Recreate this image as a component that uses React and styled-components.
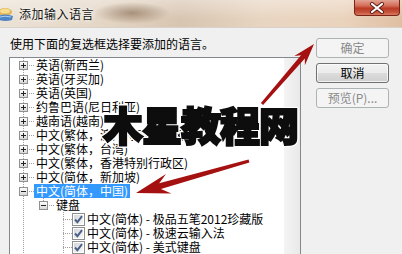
import React from 'react'
import styled, { createGlobalStyle } from 'styled-components'

const languages = [
    '英语(新西兰)',
    '英语(牙买加)',
    '英语(英国)',
    '约鲁巴语(尼日利亚)',
    '越南语(越南)',
    '中文(繁体，澳门特别行政区)',
    '中文(繁体，台湾)',
    '中文(繁体，香港特别行政区)',
    '中文(简体，新加坡)'
]

const rows = [
    ...languages.map((text) => ({ text, level: 0, exp: 'plus' })),
    { text: '中文(简体，中国)', level: 0, exp: 'minus', selected: true },
    { text: '键盘', level: 1, exp: 'minus', last: true },
    { text: '中文(简体) - 极品五笔2012珍藏版', level: 2, check: true },
    { text: '中文(简体) - 极速云输入法', level: 2, check: true },
    { text: '中文(简体) - 美式键盘', level: 2, check: true }
]

const GlobalStyle = createGlobalStyle`
    html, body { margin: 0; padding: 0; }
    body {
        width: 402px;
        height: 254px;
        overflow: hidden;
        background: #f0f0f0;
        font-family: "Noto Sans CJK SC", "DejaVu Sans", sans-serif;
    }
`

function TreeLines({ row, width }) {
    const c = 13 + 20 * row.level
    const dots = { stroke: '#a0a0a0', strokeDasharray: '1 1', shapeRendering: 'crispEdges' }
    return (
        <svg width={width} height="14" style={{ flex: 'none', display: 'block' }}>
            <defs>
                <linearGradient id="boxfill" x1="0" y1="0" x2="0" y2="1">
                    <stop offset="0" stopColor="#ffffff" />
                    <stop offset="1" stopColor="#d6d6d6" />
                </linearGradient>
            </defs>
            {row.level > 0 && <line x1="13.5" y1="0" x2="13.5" y2="14" {...dots} />}
            <line x1={c + 0.5} y1="0" x2={c + 0.5} y2={row.last ? 7 : 14} {...dots} />
            <line x1={c} y1="7.5" x2={width} y2="7.5" {...dots} />
            {row.exp && (
                <g shapeRendering="crispEdges">
                    <rect x={c - 3.5} y="3.5" width="8" height="8" fill="url(#boxfill)" stroke="#919191" />
                    <line x1={c - 2} y1="7.5" x2={c + 3} y2="7.5" stroke="#222" />
                    {row.exp === 'plus' && <line x1={c + 0.5} y1="5" x2={c + 0.5} y2="10" stroke="#222" />}
                </g>
            )}
        </svg>
    )
}

function CheckBox() {
    return (
        <svg width="13" height="13" style={{ flex: 'none', display: 'block' }}>
            <defs>
                <linearGradient id="chkfill" x1="0" y1="0" x2="1" y2="1">
                    <stop offset="0" stopColor="#d3d6db" />
                    <stop offset="1" stopColor="#f8f8f8" />
                </linearGradient>
            </defs>
            <rect x="0.5" y="0.5" width="12" height="12" fill="#fff" stroke="#8e8f8f" shapeRendering="crispEdges" />
            <rect x="2" y="2" width="9" height="9" fill="url(#chkfill)" />
            <path d="M3 6.5 L5.4 9.2 L10 3.2" fill="none" stroke="#4a5f85" strokeWidth="1.9" />
        </svg>
    )
}

function TreeRow({ row }) {
    const width = row.check ? 20 * row.level + 22 : 20 * row.level + 24
    return (
        <Row>
            <TreeLines row={row} width={width} />
            {row.check && <CheckBox />}
            <ItemLabel $selected={row.selected}>{row.text}</ItemLabel>
        </Row>
    )
}

function arrowPoints(tail, tip, headLen, headHalf, w0, w1, notch) {
    const dx = tip[0] - tail[0]
    const dy = tip[1] - tail[1]
    const len = Math.hypot(dx, dy)
    const u = [dx / len, dy / len]
    const v = [-u[1], u[0]]
    const at = (p, a, b) => [p[0] + u[0] * a + v[0] * b, p[1] + u[1] * a + v[1] * b]
    const pts = [
        at(tail, 0, w0 / 2),
        at(tip, -(headLen - notch), w1 / 2),
        at(tip, -headLen, headHalf),
        tip,
        at(tip, -headLen, -headHalf),
        at(tip, -(headLen - notch), -w1 / 2),
        at(tail, 0, -w0 / 2)
    ]
    return pts.map((p) => p.map((n) => n.toFixed(1)).join(',')).join(' ')
}

function Arrows() {
    return (
        <ArrowLayer width="402" height="254">
            <polygon points={arrowPoints([262, 104], [314, 44], 22, 7, 3, 5, 5)} fill="#a51010" />
            <polygon points={arrowPoints([249, 161], [136, 193], 34, 10, 3, 6, 9)} fill="#a51010" />
        </ArrowLayer>
    )
}

function App() {
    return (
        <Window>
            <GlobalStyle />
            <TitleBar>
                <svg width="18" height="18" style={{ marginLeft: -3, flex: 'none' }}>
                    <ellipse cx="8" cy="7" rx="7" ry="4" fill="#e2b45a" />
                    <ellipse cx="8" cy="6" rx="5" ry="2.5" fill="#f6dc8c" />
                    <path d="M1 11 Q8 8 16 11 L15 15 Q8 17 2 15 Z" fill="#4f84c4" />
                    <path d="M3 12 Q8 10.5 14 12" stroke="#a8d0f4" strokeWidth="1" fill="none" />
                </svg>
                <Title>添加输入语言</Title>
                <CloseButton>
                    <svg width="16" height="12" viewBox="0 0 16 12">
                        <path d="M3 2 L13 10 M13 2 L3 10" stroke="#5a1a12" strokeWidth="4" strokeLinecap="round" />
                        <path d="M3 2 L13 10 M13 2 L3 10" stroke="#fff" strokeWidth="2.2" strokeLinecap="round" />
                    </svg>
                </CloseButton>
            </TitleBar>
            <Body>
                <LeftColumn>
                    <Prompt>使用下面的复选框选择要添加的语言。</Prompt>
                    <ListBox>
                        <TreeView>
                            {rows.map((row) => (
                                <TreeRow key={row.text} row={row} />
                            ))}
                        </TreeView>
                        <ScrollTrack />
                    </ListBox>
                </LeftColumn>
                <ButtonColumn>
                    <Button disabled>确定</Button>
                    <Button>取消</Button>
                    <Button disabled>预览(P)...</Button>
                </ButtonColumn>
            </Body>
            <Arrows />
            <Watermark>木星教程网</Watermark>
        </Window>
    )
}

const Window = styled.div`
    position: relative;
    width: 402px;
    height: 254px;
    overflow: hidden;
    display: flex;
    flex-direction: column;
    background: #f0f0f0;
`

const TitleBar = styled.div`
    height: 27px;
    flex: none;
    display: flex;
    align-items: center;
    gap: 4px;
    border-bottom: 1px solid #d9d2ca;
    background:
        radial-gradient(ellipse 38px 11px at 132px 13px, rgba(128, 100, 74, 0.6), rgba(128, 100, 74, 0) 100%),
        linear-gradient(180deg, rgba(255, 255, 255, 0.35), rgba(255, 255, 255, 0) 70%),
        linear-gradient(90deg, #ebe2d6 0%, #e4d6c5 25%, #d8c5b1 45%, #e8d5c1 65%, #ead3bd 85%, #dfbfa3 100%);
`

const Title = styled.span`
    font-size: 12px;
    color: #111;
    letter-spacing: 0.5px;
    text-shadow: 0 0 6px rgba(255, 255, 255, 0.9), 0 0 3px rgba(255, 255, 255, 0.9);
`

const CloseButton = styled.div`
    align-self: flex-start;
    margin-left: auto;
    margin-right: 2px;
    width: 46px;
    height: 16px;
    box-sizing: border-box;
    display: flex;
    align-items: center;
    justify-content: center;
    border: 1px solid #7a2418;
    border-top: none;
    border-radius: 0 0 4px 4px;
    background: linear-gradient(180deg, #e2a394 0%, #d26a55 40%, #bb3a25 55%, #c4503a 80%, #d97c62 100%);
`

const Body = styled.div`
    flex: 1;
    display: flex;
    min-height: 0;
`

const LeftColumn = styled.div`
    width: 292px;
    margin-left: 9px;
    padding-top: 9px;
    display: flex;
    flex-direction: column;
`

const Prompt = styled.div`
    font-size: 12px;
    line-height: 14px;
    padding-left: 1px;
    color: #000;
    margin-bottom: 6px;
`

const ListBox = styled.div`
    flex: 1;
    display: flex;
    border: 1px solid #828790;
    border-bottom: none;
    background: #fff;
`

const TreeView = styled.div`
    flex: 1;
    display: flex;
    flex-direction: column;
`

const ScrollTrack = styled.div`
    width: 16px;
    background: linear-gradient(90deg, #f4f4f4, #e9e9e9);
`

const Row = styled.div`
    height: 14px;
    display: flex;
    align-items: center;
    white-space: nowrap;
`

const ItemLabel = styled.span`
    font-size: 12px;
    line-height: 14px;
    padding: 0 2px;
    color: ${(p) => (p.$selected ? '#fff' : '#000')};
    background: ${(p) => (p.$selected ? '#3399ff' : 'transparent')};
`

const ButtonColumn = styled.div`
    margin-left: 15px;
    padding-top: 10px;
    display: flex;
    flex-direction: column;
    gap: 5px;
`

const Button = styled.button`
    width: 73px;
    height: 20px;
    padding: 0;
    font-family: "Noto Sans CJK SC", sans-serif;
    font-size: 12px;
    line-height: 16px;
    color: #000;
    border: 1px solid #707070;
    border-radius: 3px;
    background: linear-gradient(180deg, #f2f2f2 0%, #ebebeb 49%, #dddddd 50%, #cfcfcf 100%);
    box-shadow: inset 0 0 0 1px rgba(255, 255, 255, 0.7);

    &:disabled {
        color: #8a8a8a;
        border-color: #adb2b5;
        background: #f4f4f4;
        box-shadow: none;
    }
`

const ArrowLayer = styled.svg`
    position: absolute;
    left: 0;
    top: 0;
    pointer-events: none;
`

const Watermark = styled.div`
    position: absolute;
    left: 103px;
    top: 104px;
    font-family: "Noto Sans CJK SC", sans-serif;
    font-size: 40px;
    line-height: 40px;
    font-weight: 900;
    letter-spacing: -1px;
    color: #0d0d0d;
    -webkit-text-stroke: 2px #0d0d0d;
    white-space: nowrap;
    filter: drop-shadow(1px 0 0 #fff) drop-shadow(-1px 0 0 #fff) drop-shadow(0 1px 0 #fff) drop-shadow(0 -1px 0 #fff);
`

export default App
